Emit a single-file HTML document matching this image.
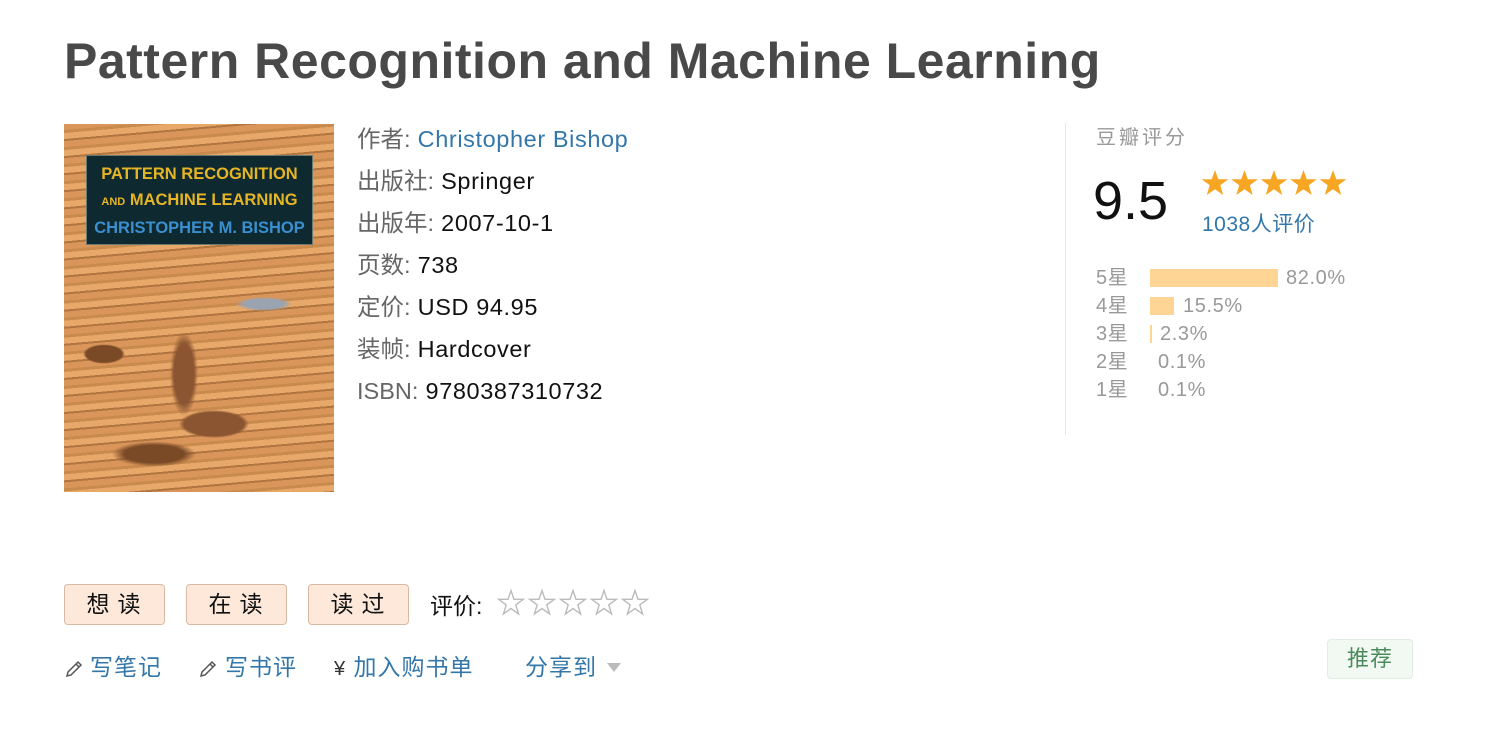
<!DOCTYPE html>
<html><head><meta charset="utf-8"><style>
body{margin:0;width:1496px;height:748px;background:#fff;font-family:"Liberation Sans","Noto Sans CJK SC",sans-serif;position:relative;overflow:hidden}
.a{position:absolute;white-space:nowrap}
h1{position:absolute;left:64px;top:31px;margin:0;font-size:50px;font-weight:bold;color:#494949;letter-spacing:0.5px;line-height:60px}
.info{left:357px;top:118px;font-size:23.5px;line-height:42px;color:#111;letter-spacing:0.6px}
.info .l{color:#666;letter-spacing:0}
.info .b{color:#37a}
.cover{left:64px;top:124px;width:270px;height:368px;background:
radial-gradient(ellipse 30px 14px at 40px 230px,#7a4a26 60%,transparent 70%),
radial-gradient(ellipse 50px 20px at 150px 300px,#8a5530 60%,transparent 70%),
radial-gradient(ellipse 40px 10px at 200px 180px,#9aa4b0 50%,transparent 70%),
radial-gradient(ellipse 60px 18px at 90px 330px,#7a4a26 50%,transparent 70%),
radial-gradient(ellipse 20px 60px at 120px 250px,#8a5530 50%,transparent 70%),
repeating-linear-gradient(175deg,#d9955a 0 6px,#c98a4e 6px 9px,#e8a86a 9px 15px,#b07540 15px 17px);}
.box{position:absolute;left:22px;top:31px;width:227px;height:90px;background:#0e2a30;border:1px solid #6a7a70;font-weight:bold;font-size:16.5px;line-height:26px;padding-top:5px;box-sizing:border-box;text-align:center;overflow:hidden}
.btn{top:584px;width:101px;height:41px;background:#fde8da;border:1px solid #d8b9a4;border-radius:4px;box-sizing:border-box;font-size:23px;line-height:39px;text-align:center;letter-spacing:8px;padding-left:6px;color:#111}
.lk{top:650px;font-size:23px;color:#37a;line-height:34px;letter-spacing:1px}
.row{left:1096px;font-size:20px;color:#999;line-height:28px;letter-spacing:0.6px}
.bar{position:absolute;left:1150px;height:18px;background:#ffd596}
</style></head><body>
<h1>Pattern Recognition and Machine Learning</h1>
<div class="a cover"><div class="box"><span style="color:#e6b525">PATTERN RECOGNITION<br><span style="font-size:11px">AND</span> MACHINE LEARNING</span><br><span style="color:#3a8fd0">CHRISTOPHER M. BISHOP</span></div></div>
<div class="a info"><span class="l">作者:</span> <span class="b">Christopher Bishop</span><br><span class="l">出版社:</span> Springer<br><span class="l">出版年:</span> 2007-10-1<br><span class="l">页数:</span> 738<br><span class="l">定价:</span> USD 94.95<br><span class="l">装帧:</span> Hardcover<br><span class="l">ISBN:</span> 9780387310732</div>
<div class="a" style="left:1065px;top:123px;width:1px;height:312px;background:#e6e6e6"></div>
<div class="a" style="left:1096px;top:121px;font-size:20px;color:#999;letter-spacing:3px">豆瓣评分</div>
<div class="a" style="left:1093px;top:168px;font-size:54px;color:#111;line-height:66px">9.5</div>
<svg class="a" style="left:1201px;top:169px" width="150" height="30" viewBox="0 0 150 30">
<defs><polygon id="s" points="14,1 17.3,10.3 27.3,10.3 19.3,16.3 22.2,26 14,20.2 5.8,26 8.7,16.3 0.7,10.3 10.7,10.3"/></defs>
<use href="#s" x="0" fill="#f6a623"/><use href="#s" x="29.5" fill="#f6a623"/><use href="#s" x="59" fill="#f6a623"/><use href="#s" x="88.5" fill="#f6a623"/><use href="#s" x="118" fill="#f6a623"/></svg>
<div class="a" style="left:1202px;top:208px;font-size:21px;color:#37a;letter-spacing:0.5px">1038人评价</div>
<div class="bar" style="top:269px;width:128px"></div>
<div class="bar" style="top:297px;width:24px"></div>
<div class="bar" style="top:325px;width:2px"></div>
<div class="a row" style="top:264px">5星<span style="position:absolute;left:190px">82.0%</span></div>
<div class="a row" style="top:292px">4星<span style="position:absolute;left:87px">15.5%</span></div>
<div class="a row" style="top:320px">3星<span style="position:absolute;left:64px">2.3%</span></div>
<div class="a row" style="top:348px">2星<span style="position:absolute;left:62px">0.1%</span></div>
<div class="a row" style="top:376px">1星<span style="position:absolute;left:62px">0.1%</span></div>
<div class="a btn" style="left:64px">想读</div>
<div class="a btn" style="left:186px">在读</div>
<div class="a btn" style="left:308px">读过</div>
<div class="a" style="left:430px;top:587px;font-size:23px;color:#111">评价:</div>
<svg class="a" style="left:497px;top:589px" width="160" height="28" viewBox="0 0 160 28">
<defs><polygon id="o" points="13,1.5 16,10.3 25.3,10.3 17.8,15.9 20.6,25 13,19.5 5.4,25 8.2,15.9 0.7,10.3 10,10.3" fill="none" stroke="#bbb" stroke-width="1.4"/></defs>
<use href="#o" x="1"/><use href="#o" x="32"/><use href="#o" x="63"/><use href="#o" x="94"/><use href="#o" x="125"/></svg>
<svg class="a" style="left:64px;top:659px" width="20" height="20" viewBox="0 0 20 20"><path d="M3 17 L4 13 L14 3 L17 6 L7 16 Z M12 5 L15 8" fill="none" stroke="#555" stroke-width="1.5"/></svg>
<div class="a lk" style="left:90px">写笔记</div>
<svg class="a" style="left:198px;top:659px" width="20" height="20" viewBox="0 0 20 20"><path d="M3 17 L4 13 L14 3 L17 6 L7 16 Z M12 5 L15 8" fill="none" stroke="#555" stroke-width="1.5"/></svg>
<div class="a lk" style="left:225px">写书评</div>
<div class="a lk" style="left:334px"><span style="color:#333;font-size:20px">¥</span> 加入购书单</div>
<div class="a lk" style="left:525px">分享到</div>
<svg class="a" style="left:607px;top:663px" width="14" height="10"><polygon points="0,0 14,0 7,9" fill="#bbb"/></svg>
<div class="a" style="left:1327px;top:639px;width:86px;height:40px;background:#f2f8f2;border:1px solid #e0ede2;border-radius:4px;box-sizing:border-box;text-align:center;font-size:22px;line-height:38px;color:#4a8a5c;letter-spacing:1px">推荐</div>
</body></html>
